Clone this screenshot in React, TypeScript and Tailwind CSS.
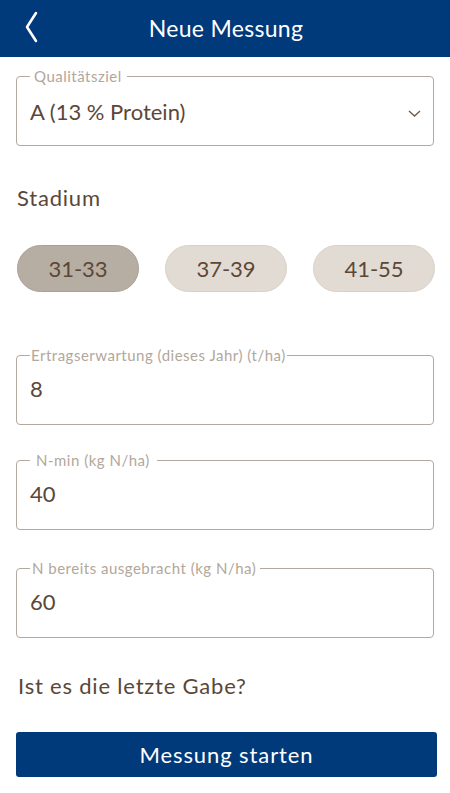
import React from "react";

const brown = "text-[#5b4737]";

function Field({
  label,
  value,
  legendPad,
  className = "",
  chevron = false,
  rowClass = "pb-[4px]",
}: {
  label: string;
  value: string;
  legendPad: string;
  className?: string;
  chevron?: boolean;
  rowClass?: string;
}) {
  return (
    <fieldset
      className={`mx-4 h-[78px] rounded-[4px] border-[1.5px] border-[#b3a99e] pl-[13px] pr-[14px] ${className}`}
    >
      <legend className={`ml-0 text-[15px] leading-4 tracking-[0.5px] text-[#b2a79b] ${legendPad}`}>{label}</legend>
      <div className={`flex h-[56px] items-center justify-between ${rowClass}`}>
        <span className={`text-[22px] leading-7 ${brown}`}>{value}</span>
        {chevron && (
          <svg width="13" height="7" viewBox="0 0 13 7" className="mr-[-2px] mt-[3px]">
            <path d="M1 1 L6.5 6 L12 1" fill="none" stroke="#6b5847" strokeWidth="1.3" />
          </svg>
        )}
      </div>
    </fieldset>
  );
}

export default function App() {
  return (
    <div className="h-[793px] w-[450px] bg-white" style={{ fontFamily: "Lato, 'Open Sans', sans-serif" }}>
      <header className="relative flex h-[57px] items-center justify-center bg-[#003a7a]">
        <svg
          width="16"
          height="32"
          viewBox="0 0 16 32"
          className="absolute left-[23px] top-[11px]"
        >
          <path d="M13 2 L4 16 L13 30" fill="none" stroke="white" strokeWidth="2.6" strokeLinecap="round" strokeLinejoin="round" />
        </svg>
        <h1 className="pl-[2px] text-[23px] tracking-[0.3px] text-white">Neue Messung</h1>
      </header>

      <Field
        label="Qualitätsziel"
        value="A (13 % Protein)"
        legendPad="pl-[4px] pr-[5px]"
        chevron
        rowClass="pb-0"
        className="mt-[11px]"
      />

      <div className={`mt-[38px] pl-[17px] text-[22px] leading-7 tracking-[0.8px] ${brown}`}>Stadium</div>

      <div className="mt-[33px] flex justify-between px-[17px] pr-[15px]">
        <button className={`flex h-[47px] w-[122px] items-center justify-center rounded-full border border-[#a9a095] bg-[#b6ada3] text-[22px] ${brown}`}>
          31-33
        </button>
        <button className={`flex h-[47px] w-[122px] items-center justify-center rounded-full border border-[#d9d1c8] bg-[#e2dbd3] text-[22px] ${brown}`}>
          37-39
        </button>
        <button className={`flex h-[47px] w-[122px] items-center justify-center rounded-full border border-[#d9d1c8] bg-[#e2dbd3] text-[22px] ${brown}`}>
          41-55
        </button>
      </div>

      <Field
        label="Ertragserwartung (dieses Jahr) (t/ha)"
        value="8"
        legendPad="px-[1px]"
        className="mt-[55px]"
      />
      <Field
        label="N-min (kg N/ha)"
        value="40"
        legendPad="pl-[6px] pr-[7px]"
        className="mt-[27px]"
      />
      <Field
        label="N bereits ausgebracht (kg N/ha)"
        value="60"
        legendPad="pl-[2px] pr-[4px]"
        className="mt-[30px]"
      />

      <div className={`mt-[34px] pl-[18px] text-[22px] leading-7 tracking-[0.8px] ${brown}`}>Ist es die letzte Gabe?</div>

      <div className="mt-[32px] px-4 pr-[13px]">
        <button className="flex h-[45px] w-full items-center justify-center rounded-[3px] bg-[#003a7a] text-[22px] tracking-[0.9px] text-white">
          Messung starten
        </button>
      </div>
    </div>
  );
}
